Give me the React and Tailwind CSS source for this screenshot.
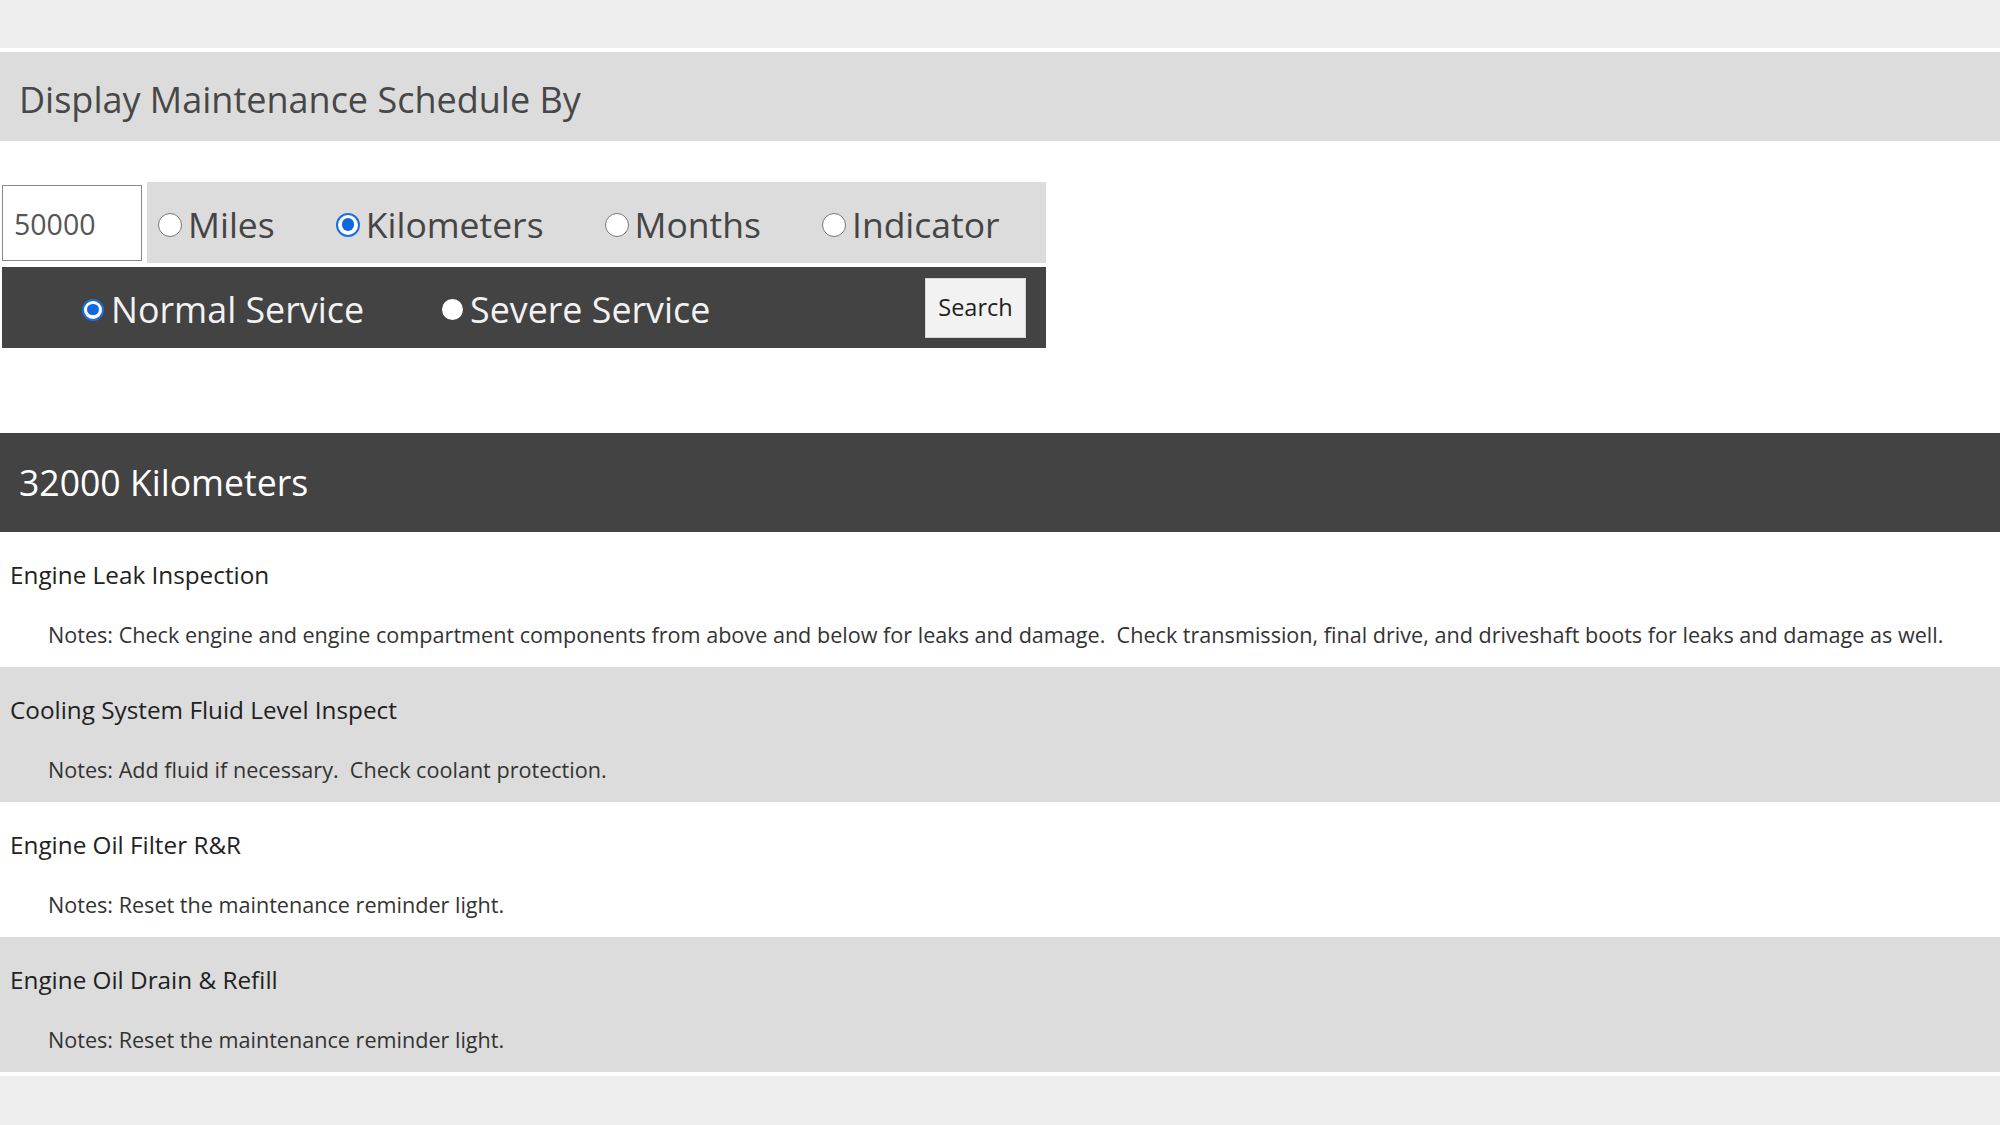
import React from 'react';

const ITEMS = [
  {
    title: 'Engine Leak Inspection',
    notes:
      'Notes: Check engine and engine compartment components from above and below for leaks and damage.  Check transmission, final drive, and driveshaft boots for leaks and damage as well.',
  },
  { title: 'Cooling System Fluid Level Inspect', notes: 'Notes: Add fluid if necessary.  Check coolant protection.' },
  { title: 'Engine Oil Filter R&R', notes: 'Notes: Reset the maintenance reminder light.' },
  { title: 'Engine Oil Drain & Refill', notes: 'Notes: Reset the maintenance reminder light.' },
];

function Radio({ checked, dark, size = 'w-[24px] h-[24px]' }) {
  if (checked) {
    return (
      <span className={`${size} shrink-0 rounded-full border-[2px] border-[#1a6fe0] bg-white flex items-center justify-center`}>
        <span className="w-[62%] h-[62%] rounded-full bg-[#0f68e0]" />
      </span>
    );
  }
  if (dark) {
    return <span className={`${size} shrink-0 rounded-full bg-white`} />;
  }
  return <span className={`${size} shrink-0 rounded-full border border-[#777] bg-white`} />;
}

function UnitOption({ label, checked }) {
  return (
    <label className="flex items-center gap-[6px]">
      <Radio checked={checked} />
      <span>{label}</span>
    </label>
  );
}

export default function App() {
  return (
    <div className="h-[1125px] overflow-hidden bg-white flex flex-col font-['Open_Sans',sans-serif]">
      <div className="h-[48px] bg-[#eeeeee]" />
      <div className="mt-[4px] h-[89px] bg-[#dcdcdc] flex items-center pl-[19px] pt-[7px] text-[36px] text-[#474747]">
        Display Maintenance Schedule By
      </div>

      <div className="pt-[41px] pl-[2px]">
        <div className="w-[1044px]">
          <div className="flex items-center">
            <input
              readOnly
              defaultValue="50000"
              className="w-[140px] h-[76px] border border-[#8a8a8a] bg-white pl-[11px] pt-[2px] text-[28.5px] text-[#555] outline-none"
            />
            <div className="ml-[5px] flex-1 h-[81px] bg-[#dcdcdc] flex items-center pl-[11px] pt-[4px] gap-[61px] text-[35.5px] text-[#454545]">
              <UnitOption label="Miles" />
              <UnitOption label="Kilometers" checked />
              <UnitOption label="Months" />
              <UnitOption label="Indicator" />
            </div>
          </div>
          <div className="mt-[4px] h-[81px] bg-[#434343] flex items-center pl-[80px] pr-[20px] text-[35.8px] text-[#f2f2f2]">
            <label className="flex items-center gap-[7px] pt-[4px]">
              <Radio checked size="w-[22px] h-[22px]" />
              <span>Normal Service</span>
            </label>
            <label className="ml-[78px] flex items-center gap-[7px] pt-[4px]">
              <Radio dark size="w-[21px] h-[21px]" />
              <span>Severe Service</span>
            </label>
            <button className="ml-auto w-[101px] h-[60px] bg-[#f2f2f2] border border-[#d6d6d6] text-[23.5px] text-[#222]">
              Search
            </button>
          </div>
        </div>
      </div>

      <div className="mt-[85px] h-[99px] bg-[#434343] flex items-center pl-[19px] text-[35.6px] text-white">
        32000 Kilometers
      </div>

      {ITEMS.map((item, i) => (
        <div key={item.title} className={`h-[135px] pt-[28px] ${i % 2 ? 'bg-[#dcdcdc]' : 'bg-white'}`}>
          <div className="h-[30px] leading-[30px] pl-[10px] text-[24.3px] text-[#222]">{item.title}</div>
          <div className="mt-[30px] h-[30px] leading-[30px] pl-[48px] text-[21.6px] text-[#333] whitespace-pre">{item.notes}</div>
        </div>
      ))}

      <div className="mt-[4px] flex-1 bg-[#eeeeee]" />
    </div>
  );
}
